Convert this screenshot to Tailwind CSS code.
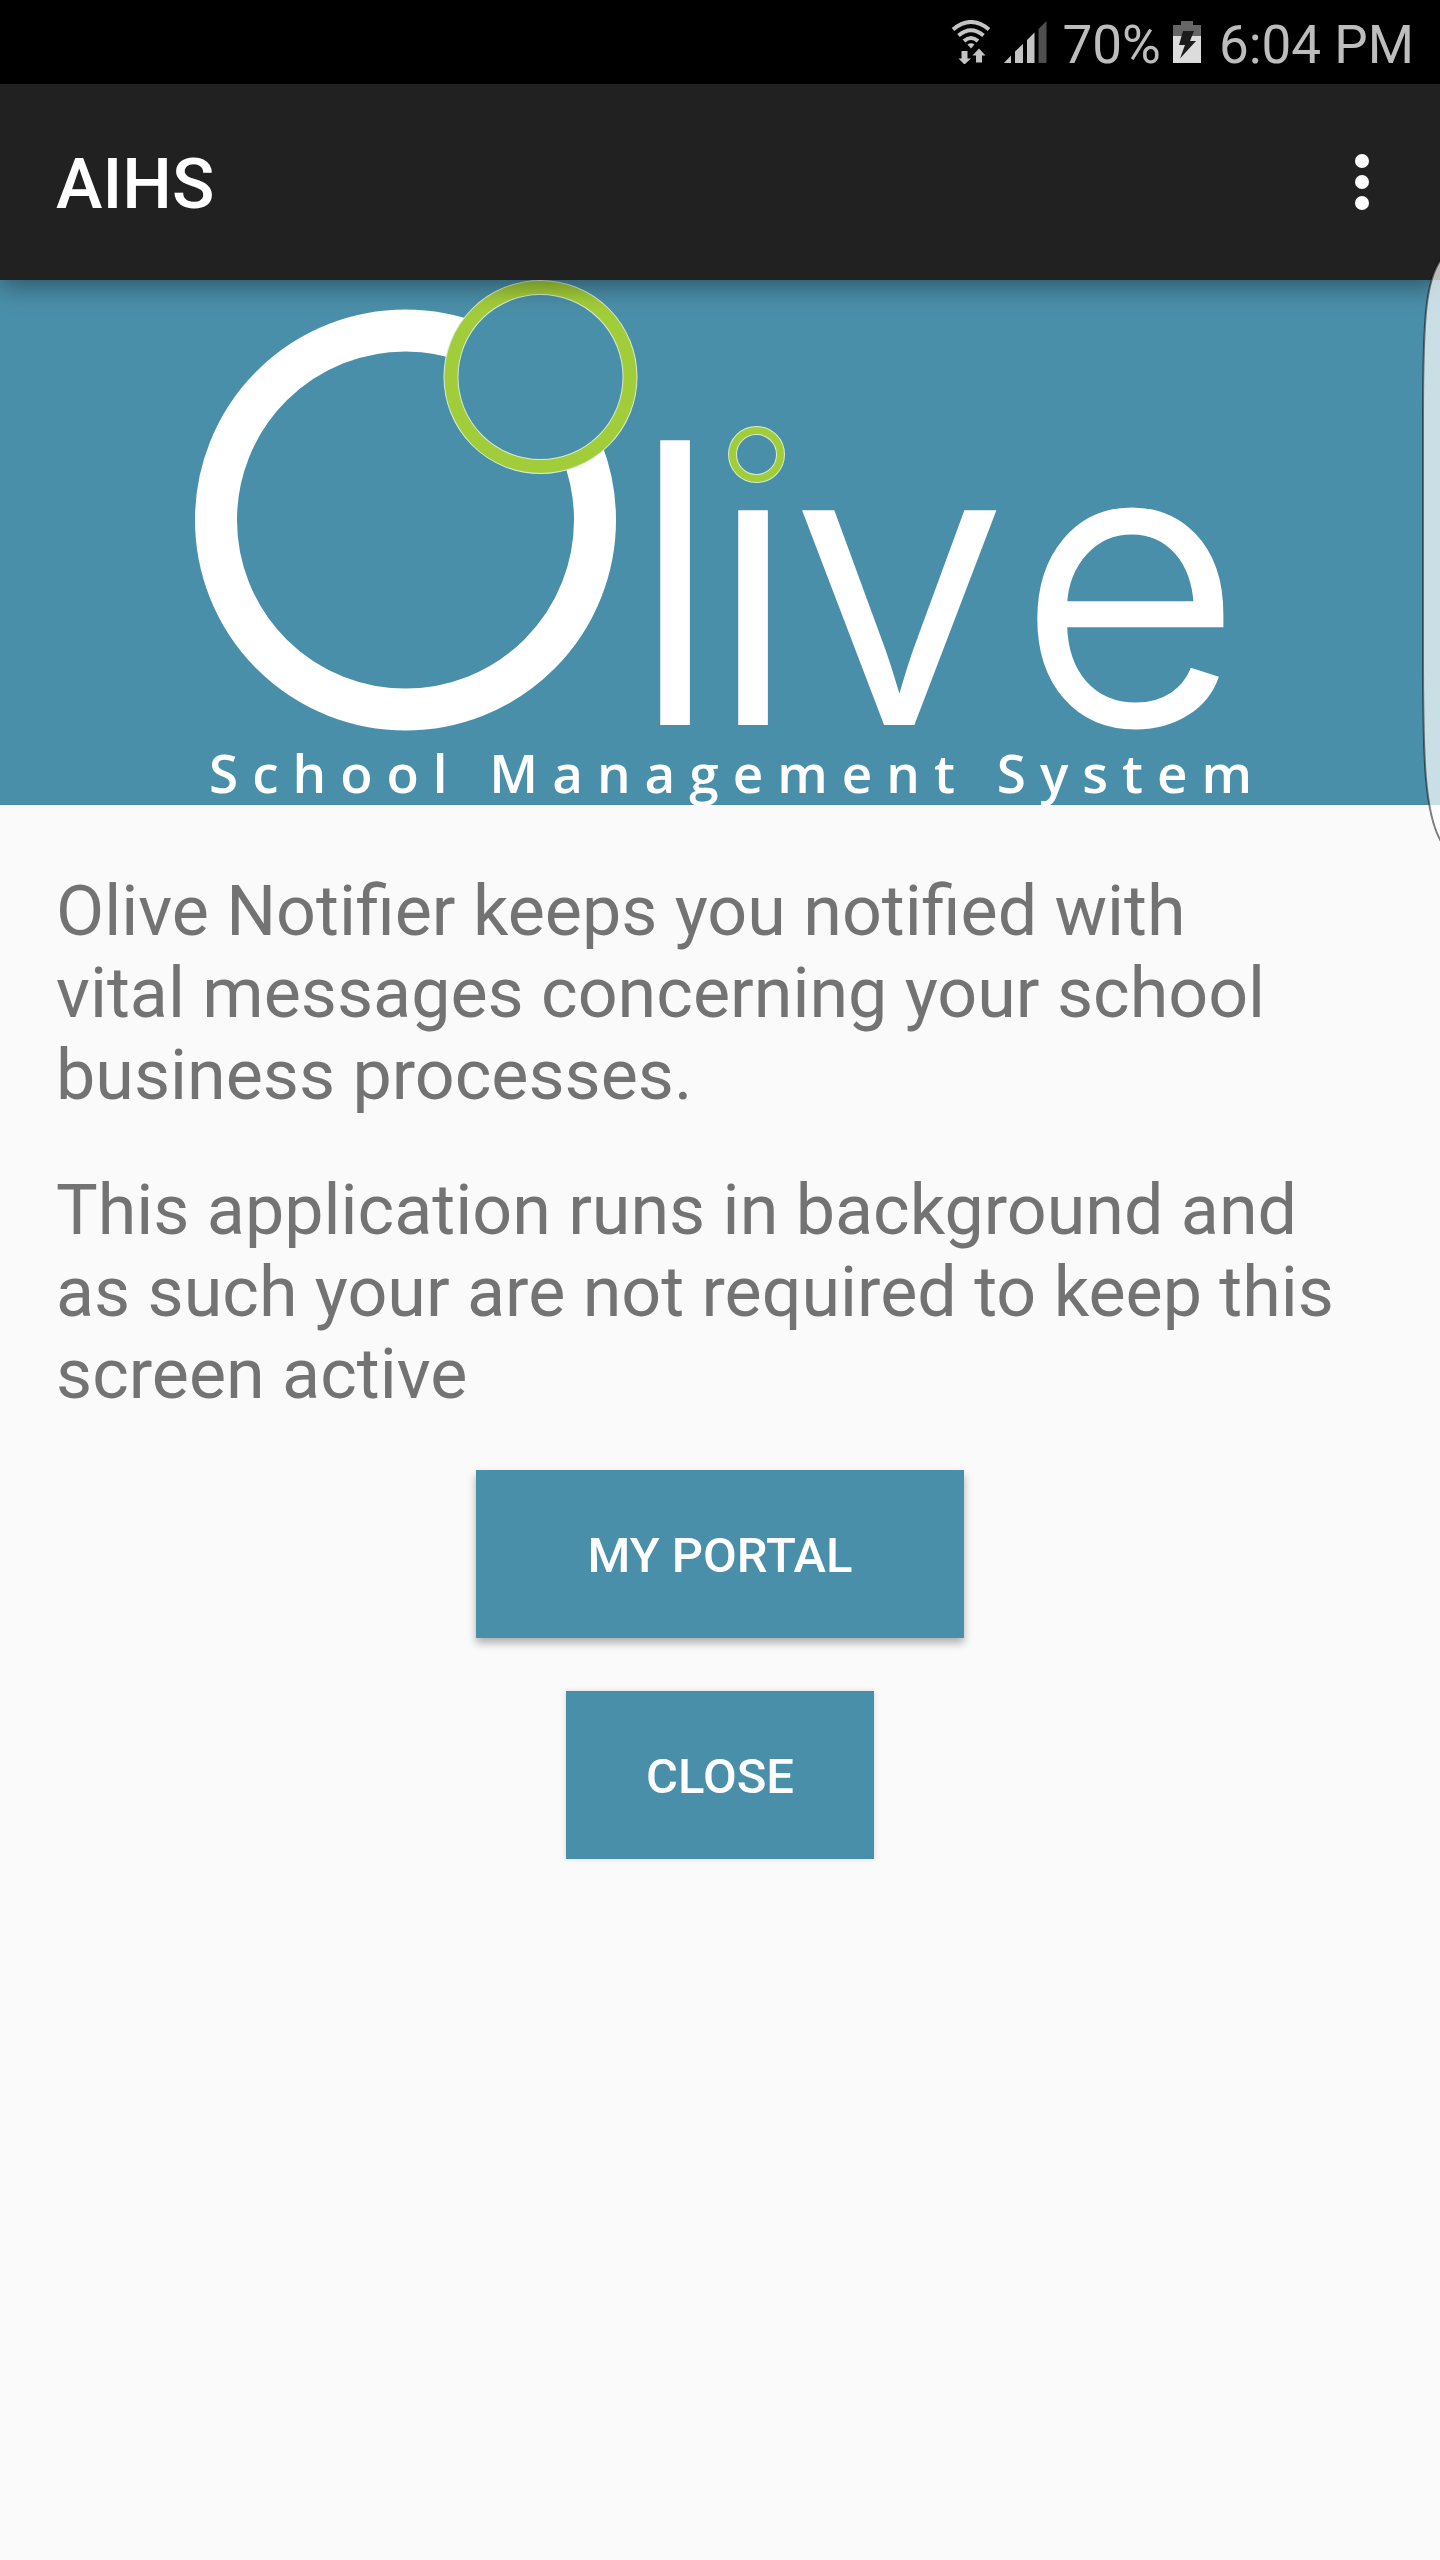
<!DOCTYPE html>
<html lang="en">
<head>
  <meta charset="UTF-8">
  <meta name="viewport" content="width=device-width, initial-scale=1.0">
  <title>AIHS</title>
  <script src="https://cdn.jsdelivr.net/npm/@tailwindcss/browser@4"></script>
</head>
<body class="relative min-h-screen overflow-x-hidden bg-[#fafafa] font-['Roboto',sans-serif]">

  <!-- Status bar -->
  <div class="flex h-[84px] items-center justify-end bg-black pr-[26px] text-[53px] text-[#bdbdbd]">
    <svg class="mr-3 h-11 w-10" viewBox="0 0 40 44" fill="none" stroke="#c4c4c4" stroke-width="4">
      <path d="M2 9.500Q20 -5.500 38 9.500M7.500 15.500Q20 5 32.500 15.500M13 21Q20 15 27 21" />
      <path d="M16.500 24.500Q20 22 23.500 24.500L20 28.500Z" fill="#c4c4c4" stroke="none" />
      <path d="M10.500 31h6v7.500h3.500L13.500 44.500L7.500 38.500h3zM25 42.500h6v-7h3.500L28 28.500L21.500 35.500h3.500z" fill="#c4c4c4" stroke="none" />
    </svg>
    <svg class="mr-4 h-11 w-11" viewBox="0 0 44 44" fill="#c4c4c4">
      <path d="M1 43L8 35.500V43zM12 31.500L20 24V43H12zM24 20L31.500 12.500V43H24z" />
      <path d="M35.500 9L43.500 1V43H35.500z" fill="#4f4f4f" />
    </svg>
    <span class="pt-2">70%</span>
    <svg class="mx-3 h-[42px] w-7" viewBox="0 0 28 42">
      <path d="M8 0H20V4H28V15H0V4H8z" fill="#666" />
      <path d="M0 15H28V42H0z" fill="#dcdcdc" />
      <path d="M10 10H21L17 20H23L7 37.500L12 24H6z" fill="#1c1c1c" />
    </svg>
    <span class="ml-[6px] pt-2">6:04 PM</span>
  </div>

  <!-- App bar -->
  <header class="relative z-10 flex h-[196px] items-center justify-between bg-[#212121] pr-14 pl-14 shadow-[0_6px_24px_rgba(0,0,0,0.4)]">
    <h1 class="pt-1 text-[70px] font-medium text-white">AIHS</h1>
    <button type="button" aria-label="More options" class="flex w-11 flex-col items-center gap-[7px]">
      <span class="size-[14px] rounded-full bg-white"></span>
      <span class="size-[14px] rounded-full bg-white"></span>
      <span class="size-[14px] rounded-full bg-white"></span>
    </button>
  </header>

  <!-- Logo banner -->
  <div class="bg-[#4a8fa9]">
    <svg class="block w-full overflow-visible" viewBox="0 0 1440 525" role="img" aria-label="Olive School Management System">
      <circle cx="405.500" cy="240" r="189.500" fill="none" stroke="#fff" stroke-width="42" />
      <circle cx="540.500" cy="97" r="89.500" fill="#4a8fa9" stroke="#d5ecd0" stroke-width="15" />
      <circle cx="540.500" cy="97" r="89.500" fill="none" stroke="#a2cd3a" stroke-width="13" />
      <circle cx="756.500" cy="174.500" r="24" fill="none" stroke="#d5ecd0" stroke-width="9" />
      <circle cx="756.500" cy="174.500" r="24" fill="none" stroke="#a2cd3a" stroke-width="7" />
      <g fill="#fff">
        <text x="630 708 792 1018" y="443" stroke="#fff" stroke-width="4" class="font-['Inter',sans-serif] text-[386px] font-light">lıve</text>
        <text x="209" y="513" class="font-['Open_Sans',sans-serif] text-[53px] font-semibold tracking-[14px]">School Management System</text>
      </g>
    </svg>
  </div>

  <!-- Edge panel handle -->
  <svg class="absolute top-[255px] right-0 z-20 h-[592px] w-5" viewBox="0 0 20 592" aria-hidden="true">
    <path d="M22 3C6 24 3 60 3 160V400C3 500 4 560 22 588" fill="#fff" fill-opacity="0.7" stroke="#000" stroke-opacity="0.5" stroke-width="2" />
  </svg>

  <!-- Content -->
  <main class="px-14 pt-[65px] text-[70px] leading-[82px] text-[#737373]">
    <p>Olive Notifier keeps you notified with<br>vital messages concerning your school business processes.</p>
    <p class="mt-[53px]">This application runs in background and as such your are not required to keep this screen active</p>

    <div class="mt-[55px] flex flex-col items-center gap-[53px] text-[49px] font-medium text-white">
      <button type="button" class="h-[168px] bg-[#4a8fa9] px-[111px] pt-1 shadow-[0_5px_8px_rgba(0,0,0,0.3)]">MY PORTAL</button>
      <button type="button" class="h-[168px] min-w-[308px] bg-[#4a8fa9] px-14 pt-1 shadow-[0_0_5px_rgba(0,0,0,0.15)]">CLOSE</button>
    </div>
  </main>

</body>
</html>
